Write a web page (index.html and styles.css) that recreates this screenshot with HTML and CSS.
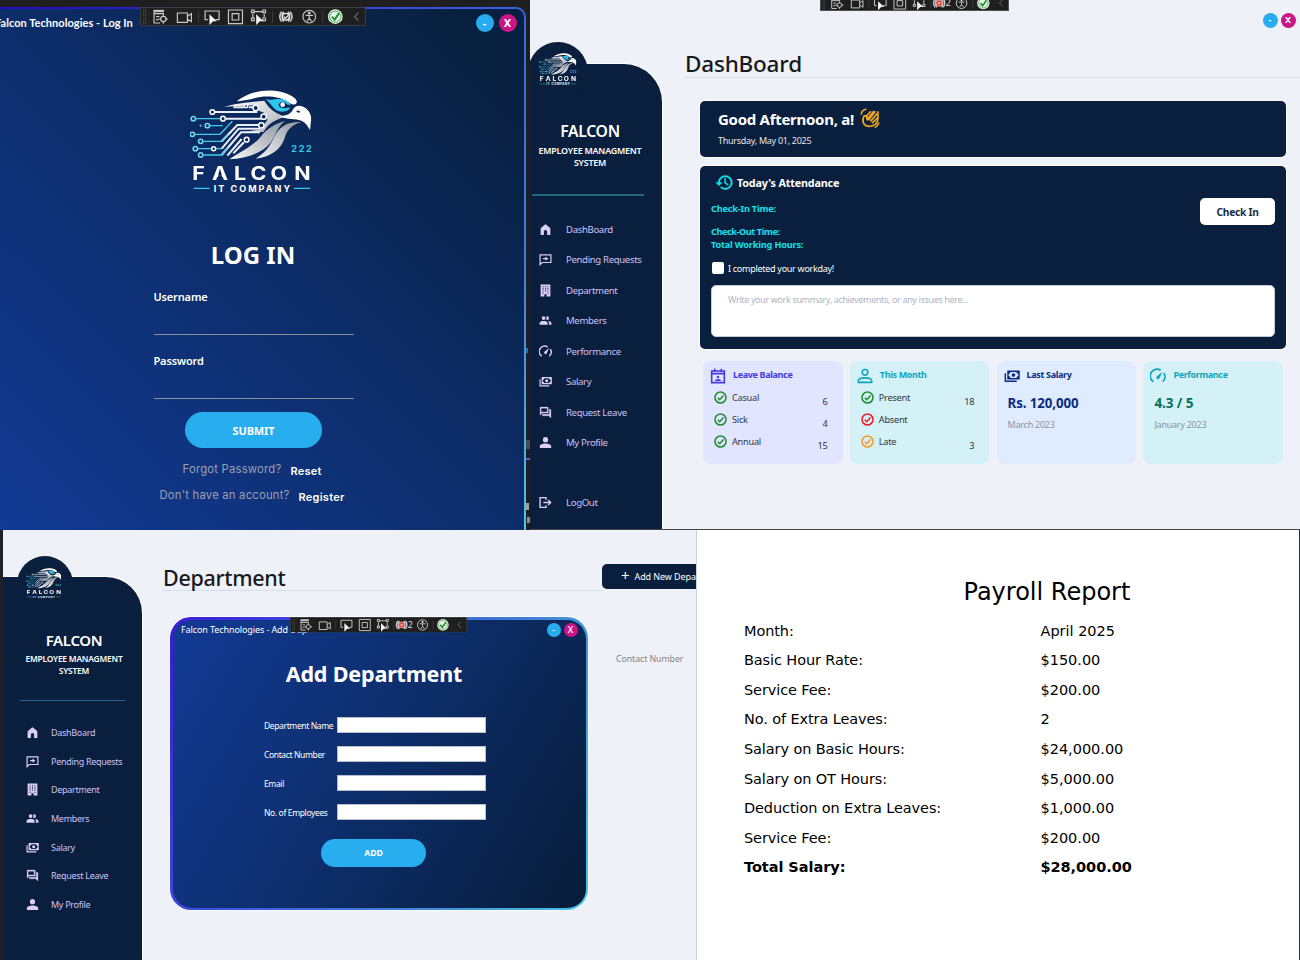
FILE: index.html
```html
<!DOCTYPE html>
<html lang="en">
<head>
<meta charset="utf-8">
<title>Falcon Technologies</title>
<link rel="stylesheet" href="styles.css">
</head>
<body>
<svg class="defs" aria-hidden="true">
  <defs>
    <linearGradient id="silver" x1="0" y1="0" x2="1" y2="1"><stop offset="0" stop-color="#fff"/><stop offset="1" stop-color="#a9adb5"/></linearGradient>
    <linearGradient id="plume" x1="1" y1="0" x2="0" y2="1"><stop offset="0" stop-color="#8f959f"/><stop offset="1" stop-color="#f4f5f7"/></linearGradient>
    <mask id="noBar" maskUnits="userSpaceOnUse" x="0" y="200" width="510" height="220"><rect x="0" y="200" width="510" height="220" fill="#fff"/><path d="M120.500 333 L130.500 305 L140.500 333Z" fill="#000"/></mask>
  </defs>
  <symbol id="falcon" viewBox="60 60 365 310" preserveAspectRatio="none">
    <path fill="url(#silver)" d="M162 110C185 104 205 100 225 98L283 92C292 108 305 122 328 133L345 141C325 146 305 155 290 172L280 186H225L272 178L292 150L282 128L266 122L252 106Z"/>
    <path fill="#fff" d="M200 94C235 66 285 55 332 65C362 72 385 88 380 98C374 108 362 103 350 94C325 77 280 76 248 86C230 90 215 92 200 94Z"/>
    <path fill="#fff" d="M330 139C350 137 362 132 368 120C374 108 385 105 396 109C415 116 426 134 423 152L420 180C412 166 406 157 394 152C376 146 352 150 330 139Z"/>
    <path fill="#0c2a5e" d="M378 123q8-4 13 3q-7 5-13-3z"/>
    <path fill="#2ec4ee" d="M285 88C305 92 318 84 338 88C350 90 358 98 362 106L350 103A13 13 0 0 0 326 103C326 112 336 118 360 112C358 124 335 130 318 120C306 112 300 96 285 88Z"/>
    <circle cx="338" cy="104" r="7" fill="#fff"/>
    <path fill="url(#plume)" d="M178 268C215 243 250 228 272 200C290 176 318 160 345 153C318 176 318 196 300 220C278 248 230 266 178 268Z"/>
    <path fill="url(#plume)" d="M257 266C290 246 300 226 312 202C326 172 350 154 395 156C362 166 350 182 344 204C334 238 300 262 257 266Z"/>
    <g fill="none" stroke="#e9eef7" stroke-width="6">
      <path d="M135 126H262M167 146H274M190 112H222M236 112H249M155 214L202 165H266M155 236L206 176H272M155 255L213 187H270M172 257L215 207M190 250L222 217"/>
    </g>
    <g fill="none" stroke="#43cdea" stroke-width="4">
      <path d="M78 146H151M120 167H158M75 193H150L187 154M100 214H155L175 194M84 236H123M139 236H156M100 255H155L175 232"/>
    </g>
    <g fill="#0c2a5e" stroke="#fff" stroke-width="4.500">
      <circle cx="127" cy="126" r="7"/><circle cx="159" cy="146" r="7"/><circle cx="257" cy="114" r="8"/><circle cx="228" cy="108" r="5"/><circle cx="281" cy="140" r="8"/><circle cx="274" cy="166" r="8"/><circle cx="230" cy="209" r="7"/><circle cx="131" cy="236" r="6"/>
    </g>
    <g fill="#0c2a5e" stroke="#6fdcf2" stroke-width="4.500">
      <circle cx="70" cy="146" r="6.500"/><circle cx="112" cy="167" r="6.500"/><circle cx="67" cy="193" r="6.500"/><circle cx="92" cy="214" r="6.500"/><circle cx="76" cy="236" r="6.500"/><circle cx="92" cy="255" r="6.500"/><circle cx="92" cy="167" r="1"/>
    </g>
    <path stroke="#35c9ea" stroke-width="4" d="M71 355H119M371 355H420"/>
  </symbol>

  <symbol id="bar" viewBox="0 0 677 57" preserveAspectRatio="none">
    <rect x="1" y="1" width="675" height="55" fill="#1f1f1f" stroke="#4a4a4a" stroke-width="2"/>
    <path d="M11 6V52M17 6V52" stroke="#5a5a5a" stroke-width="3" stroke-dasharray="3 3"/>
    <path d="M175 12V48M397 12V48M547 12V48" stroke="#3c3c3c" stroke-width="3"/>
    <g fill="none" stroke="#c9c9c9" stroke-width="3.500">
      <path d="M42 9V48H60M42 20H72M48 29H58M48 38H56"/><path d="M42 12H72" stroke-width="7"/>
      <circle cx="70" cy="36" r="8"/><path d="M70 22V29M70 43V50M56 36H63M77 36H84"/>
      <path d="M112 18H142V46H112ZM142 28L154 20V44L142 36"/>
      <path d="M203 38H195V12H237V38H226"/>
      <path d="M265 9H307V50H265ZM276 20H296V39H276Z"/>
      <path d="M340 14H370M338 20V35M372 20V30M334 9h8v8h-8zM368 9h8v8h-8zM334 33h8v8h-8zM368 33h8v8h-8z"/>
      <circle cx="507" cy="29" r="19"/><path d="M496 25H518M507 25V34L500 43M507 34L514 43"/>
    </g>
    <circle cx="507" cy="18" r="4" fill="#ddd"/>
    <path fill="#f4f4f4" d="M208 22L230 43H219L208 54ZM348 22L370 43H359L348 54Z"/>
    <circle cx="585" cy="29" r="22" fill="#e8f6e8"/><circle cx="585" cy="29" r="17" fill="none" stroke="#55a65c" stroke-width="3"/>
    <path d="M575 29L583 38L596 19" fill="none" stroke="#228b33" stroke-width="6"/>
    <path d="M654 17L643 29L654 41" fill="none" stroke="#777" stroke-width="3"/>
  </symbol>

  <symbol id="home" viewBox="0 0 24 24"><path fill="currentColor" d="M3 22V10.500Q3 9.500 4 8.700L10.500 3Q12 1.800 13.500 3L20 8.700Q21 9.500 21 10.500V22H15V16A3 3 0 0 0 9 16V22Z"/></symbol>
  <symbol id="pending" viewBox="0 0 24 24"><path fill="none" stroke="currentColor" stroke-width="2.200" d="M2 21.500V3.500H22V17.500H6ZM7.500 10.500H16"/><path fill="currentColor" d="M12 6.500L17 10.500L12 14.500Z"/></symbol>
  <symbol id="building" viewBox="0 0 24 24"><path fill="currentColor" fill-rule="evenodd" d="M3 1H21V23H14V19H10V23H3ZM6.500 4V6H8.500V4ZM11 4V6H13V4ZM15.500 4V6H17.500V4ZM6.500 8V10H8.500V8ZM11 8V10H13V8ZM15.500 8V10H17.500V8ZM6.500 12V14H8.500V12ZM11 12V14H13V12ZM15.500 12V14H17.500V12ZM6.500 16V18H8.500V16ZM15.500 16V18H17.500V16Z"/></symbol>
  <symbol id="members" viewBox="0 0 24 24"><path fill="currentColor" d="M16 17v3H1v-3s0-4 7.500-4 7.500 4 7.500 4M12 7.500A3.500 3.500 0 1 0 8.500 11 3.500 3.500 0 0 0 12 7.500M16.500 13A5.300 5.300 0 0 1 18.500 17v3H23v-3s0-3.600-6.500-4M15 4a3.400 3.400 0 0 0-1.900.6 5 5 0 0 1 0 5.800A3.400 3.400 0 0 0 15 11a3.500 3.500 0 0 0 0-7z"/></symbol>
  <symbol id="gauge" viewBox="0 0 24 24"><path fill="none" stroke="currentColor" stroke-width="2.600" d="M5 20.500A10 10 0 0 1 16 3.500M20.800 7.500A10 10 0 0 1 19 20.500"/><path fill="currentColor" d="M18.500 5.500L14.300 15.500A2.600 2.600 0 1 1 10 12.600Z"/></symbol>
  <symbol id="cash" viewBox="0 0 24 24"><path fill="none" stroke="currentColor" stroke-width="2.200" d="M6 5H22.500V16H6ZM2 8V20H19"/><path fill="currentColor" d="M6 5h4a4 4 0 0 1-4 4zM22.500 5h-4a4 4 0 0 0 4 4zM6 16h4a4 4 0 0 0-4-4zM22.500 16h-4a4 4 0 0 1 4-4z"/><circle cx="14.200" cy="10.500" r="2.800" fill="currentColor"/></symbol>
  <symbol id="forum" viewBox="0 0 24 24"><path fill="currentColor" d="M15 4v7H5.170L4 12.170V4h11m1-2H3a1 1 0 0 0-1 1v14l4-4h10a1 1 0 0 0 1-1V3a1 1 0 0 0-1-1m5 4h-2v9H6v2a1 1 0 0 0 1 1h11l4 4V7a1 1 0 0 0-1-1z" stroke="currentColor" stroke-width=".6"/></symbol>
  <symbol id="person" viewBox="0 0 24 24"><path fill="currentColor" d="M12 2a4.800 4.800 0 1 1 0 9.600A4.800 4.800 0 0 1 12 2m0 12c5.500 0 10.500 2 10.500 5v3h-21v-3c0-3 5-5 10.500-5z"/></symbol>
  <symbol id="logout" viewBox="0 0 24 24"><path fill="none" stroke="currentColor" stroke-width="2.600" d="M13 7V3H2V21H13V17M8 12H21M17 7.500L21.500 12L17 16.500"/></symbol>
  <symbol id="history" viewBox="0 0 24 24"><path fill="currentColor" stroke="currentColor" stroke-width=".5" d="M13.500 7H12v6l4.280 2.540.72-1.210-3.500-2.080V7M13 3a9 9 0 0 0-9 9H1l3.960 4.030L9 12H6a7 7 0 0 1 7-7 7 7 0 0 1 7 7 7 7 0 0 1-7 7c-1.930 0-3.680-.79-4.940-2.060l-1.420 1.420A8.900 8.900 0 0 0 13 21a9 9 0 0 0 9-9 9 9 0 0 0-9-9"/></symbol>
  <symbol id="calendar" viewBox="0 0 24 24"><path fill="none" stroke="currentColor" stroke-width="2.400" d="M2.500 4.500H21.500V22H2.500ZM2.500 8.500H21.500M7 1V6M17 1V6"/><circle cx="12" cy="13.500" r="2" fill="currentColor"/><path fill="currentColor" d="M7.500 19.500q0-3 4.500-3t4.500 3z"/></symbol>
  <symbol id="person-line" viewBox="0 0 24 24"><g fill="none" stroke="currentColor" stroke-width="2.400"><circle cx="12" cy="6.500" r="4.300"/><path d="M2 21.500V19C2 13.500 22 13.500 22 19V21.500Z"/></g></symbol>
  <symbol id="tick" viewBox="0 0 24 24"><g fill="none" stroke="currentColor" stroke-width="2.800"><circle cx="12" cy="12" r="10.200"/><path d="M7 12.500L10.500 16L17.500 8.500"/></g></symbol>
  <symbol id="clap" viewBox="0 0 24 24"><g fill="none" stroke="#f0a71d" stroke-width="2" stroke-linecap="round" stroke-linejoin="round"><path d="M5 9.500C1.500 15 4 22 11.500 22C17 22 21.500 18 21.500 13V4.500"/><path d="M5 9.500Q8 8 8.500 14L16 4.500M10.500 14L18 4.500M13 15.500L21 6.500M15 17.500L21.500 11.500M8.500 14V9L12.500 4.500"/><path d="M1.500 7Q2.500 2.500 7 1.500M22.500 18Q21.500 21 18.500 23"/></g></symbol>
</svg>

<main class="board">
  <section class="shot login-shot">
    <div class="frame login-frame"><div class="pane login-pane">
      <header class="titlebar login-titlebar">
        <span class="caption login-caption">Falcon Technologies - Log In</span>
        <span class="dots"><b class="dot min">-</b><b class="dot close">X</b></span>
      </header>
      <svg class="logo-big" viewBox="60 60 365 310" preserveAspectRatio="none"><use href="#falcon" x="60" y="60" width="365" height="310"/><text x="364" y="247" class="logo-num" textLength="61">222</text><text x="58 109.5 167 210 262 324" y="331" transform="scale(1.15 1)" class="logo-name" mask="url(#noBar)">FALCON</text><text x="131" y="366" class="logo-sub" textLength="229">IT COMPANY</text></svg>
      <h1 class="login-title">LOG IN</h1>
      <form class="login-form">
        <label class="login-label">Username</label><div class="line-field"></div>
        <label class="login-label second">Password</label><div class="line-field"></div>
      </form>
      <div class="pill submit">SUBMIT</div>
      <p class="hint forgot"><span>Forgot Password?</span><b>Reset</b></p>
      <p class="hint signup"><span>Don't have an account?</span><b>Register</b></p>
    </div></div>
    <svg class="debugbar one" viewBox="0 0 677 57" preserveAspectRatio="none"><use href="#bar" width="677" height="57"/>
      <path d="M424 14Q414 28 424 44M430 14Q422 28 430 44M450 14Q460 28 450 44M444 14Q452 28 444 44" fill="none" stroke="#ccc" stroke-width="5"/>
      <circle cx="437" cy="29" r="10" fill="#1f1f1f" stroke="#eee" stroke-width="4"/><path d="M431 29l5 5 8-9" fill="none" stroke="#eee" stroke-width="4"/>
    </svg>
    <i class="speck s1"></i><i class="speck s2"></i><i class="speck s3"></i><i class="speck s4"></i><i class="speck s5"></i>
  </section>

  <section class="shot dash-shot">
    <aside class="side dash-side">
      <div class="badge dash-badge"></div>
      <svg class="logo-small dash-logo" viewBox="60 60 365 310" preserveAspectRatio="none"><use href="#falcon" x="60" y="60" width="365" height="310"/><text x="364" y="247" class="logo-num" textLength="61">222</text><text x="58 109.5 167 210 262 324" y="331" transform="scale(1.15 1)" class="logo-name" mask="url(#noBar)">FALCON</text><text x="131" y="366" class="logo-sub" textLength="229">IT COMPANY</text></svg>
      <h2 class="brand">FALCON</h2>
      <p class="tagline">EMPLOYEE MANAGMENT<br>SYSTEM</p>
      <hr class="rule">
      <nav class="menu">
        <a><svg><use href="#home"/></svg>DashBoard</a>
        <a><svg><use href="#pending"/></svg>Pending Requests</a>
        <a><svg><use href="#building"/></svg>Department</a>
        <a><svg><use href="#members"/></svg>Members</a>
        <a><svg><use href="#gauge"/></svg>Performance</a>
        <a><svg><use href="#cash"/></svg>Salary</a>
        <a><svg><use href="#forum"/></svg>Request Leave</a>
        <a><svg><use href="#person"/></svg>My Profile</a>
        <a class="logout"><svg><use href="#logout"/></svg>LogOut</a>
      </nav>
    </aside>
    <div class="dash-main">
      <div class="dots dash-dots"><b class="dot min">-</b><b class="dot close">X</b></div>
      <h1 class="page-title dash-title">DashBoard</h1>
      <div class="card greet">
        <h3>Good Afternoon, a!<svg><use href="#clap"/></svg></h3>
        <p>Thursday, May 01, 2025</p>
      </div>
      <div class="card attend">
        <div class="attend-top">
          <div class="attend-info">
            <h4><svg><use href="#history"/></svg>Today's Attendance</h4>
            <p class="cyan in">Check-In Time:</p>
            <p class="cyan out">Check-Out Time:</p>
            <p class="cyan total">Total Working Hours:</p>
          </div>
          <div class="checkin">Check In</div>
        </div>
        <label class="done"><i></i>I completed your workday!</label>
        <div class="summary">Write your work summary, achievements, or any issues here...</div>
      </div>
      <div class="stats">
        <div class="stat lilac">
          <h5><svg><use href="#calendar"/></svg>Leave Balance</h5>
          <div class="item"><svg><use href="#tick"/></svg>Casual<em>6</em></div>
          <div class="item"><svg><use href="#tick"/></svg>Sick<em>4</em></div>
          <div class="item"><svg><use href="#tick"/></svg>Annual<em>15</em></div>
        </div>
        <div class="stat aqua">
          <h5><svg><use href="#person-line"/></svg>This Month</h5>
          <div class="item"><svg><use href="#tick"/></svg>Present<em>18</em></div>
          <div class="item bad"><svg><use href="#tick"/></svg>Absent</div>
          <div class="item late"><svg><use href="#tick"/></svg>Late<em>3</em></div>
        </div>
        <div class="stat sky">
          <h5><svg><use href="#cash"/></svg>Last Salary</h5>
          <strong>Rs. 120,000</strong><small>March 2023</small>
        </div>
        <div class="stat aqua">
          <h5><svg><use href="#gauge"/></svg>Performance</h5>
          <strong class="score">4.3 / 5</strong><small>January 2023</small>
        </div>
      </div>
    </div>
    <svg class="debugbar two" viewBox="0 0 677 57" preserveAspectRatio="none"><use href="#bar" width="677" height="57"/>
      <path d="M412 14Q402 28 412 44M418 14Q410 28 418 44M442 14Q452 28 442 44M436 14Q444 28 436 44" fill="none" stroke="#ccc" stroke-width="5"/>
      <circle cx="427" cy="29" r="11" fill="#e5352b" stroke="#f3b6b2" stroke-width="3"/><path d="M423 25l8 8M431 25l-8 8" stroke="#fff" stroke-width="3"/>
      <text x="450" y="40" class="bar-count">2</text>
    </svg>
  </section>

  <section class="shot dept-shot">
    <aside class="side dept-side">
      <div class="badge dept-badge"></div>
      <svg class="logo-small dept-logo" viewBox="60 60 365 310" preserveAspectRatio="none"><use href="#falcon" x="60" y="60" width="365" height="310"/><text x="364" y="247" class="logo-num" textLength="61">222</text><text x="58 109.5 167 210 262 324" y="331" transform="scale(1.15 1)" class="logo-name" mask="url(#noBar)">FALCON</text><text x="131" y="366" class="logo-sub" textLength="229">IT COMPANY</text></svg>
      <h2 class="brand">FALCON</h2>
      <p class="tagline">EMPLOYEE MANAGMENT<br>SYSTEM</p>
      <hr class="rule">
      <nav class="menu">
        <a><svg><use href="#home"/></svg>DashBoard</a>
        <a><svg><use href="#pending"/></svg>Pending Requests</a>
        <a><svg><use href="#building"/></svg>Department</a>
        <a><svg><use href="#members"/></svg>Members</a>
        <a><svg><use href="#cash"/></svg>Salary</a>
        <a><svg><use href="#forum"/></svg>Request Leave</a>
        <a><svg><use href="#person"/></svg>My Profile</a>
      </nav>
    </aside>
    <div class="dept-main">
      <div class="dept-head"><h1 class="page-title dept-title">Department</h1><div class="add-btn"><span>+</span>Add New Depa</div></div>
      <div class="dept-body">
        <div class="frame dialog"><div class="pane dialog-pane">
          <header class="titlebar dialog-titlebar">
            <span class="caption">Falcon Technologies - Add Dep</span>
            <span class="dots"><b class="dot min">-</b><b class="dot close">X</b></span>
          </header>
          <h2 class="dialog-title">Add Department</h2>
          <div class="dialog-form">
            <label>Department Name</label><div class="box"></div>
            <label>Contact Number</label><div class="box"></div>
            <label>Email</label><div class="box"></div>
            <label>No. of Employees</label><div class="box"></div>
          </div>
          <div class="pill add">ADD</div>
        </div></div>
        <span class="col-head">Contact Number</span>
      </div>
    </div>
    <svg class="debugbar three" viewBox="0 0 677 57" preserveAspectRatio="none"><use href="#bar" width="677" height="57"/>
      <path d="M412 14Q402 28 412 44M418 14Q410 28 418 44M442 14Q452 28 442 44M436 14Q444 28 436 44" fill="none" stroke="#ccc" stroke-width="5"/>
      <circle cx="427" cy="29" r="11" fill="#e5352b" stroke="#f3b6b2" stroke-width="3"/><path d="M423 25l8 8M431 25l-8 8" stroke="#fff" stroke-width="3"/>
      <text x="450" y="40" class="bar-count">2</text>
    </svg>
  </section>

  <section class="shot payroll">
    <h1>Payroll Report</h1>
    <dl>
      <dt>Month:</dt><dd>April 2025</dd>
      <dt>Basic Hour Rate:</dt><dd>$150.00</dd>
      <dt>Service Fee:</dt><dd>$200.00</dd>
      <dt>No. of Extra Leaves:</dt><dd>2</dd>
      <dt>Salary on Basic Hours:</dt><dd>$24,000.00</dd>
      <dt>Salary on OT Hours:</dt><dd>$5,000.00</dd>
      <dt>Deduction on Extra Leaves:</dt><dd>$1,000.00</dd>
      <dt>Service Fee:</dt><dd>$200.00</dd>
      <dt class="sum">Total Salary:</dt><dd class="sum">$28,000.00</dd>
    </dl>
  </section>
</main>
</body>
</html>
```
FILE: styles.css
```css
* { box-sizing: border-box; }
body, h1, h2, h3, h4, h5, p, dl, dd, hr { margin: 0; padding: 0; }
body { width: 1300px; height: 960px; overflow: hidden; background: #1f1f1f; font-family: "Noto Sans", "Open Sans", sans-serif; white-space: nowrap; }
svg { display: block; flex: none; }
.defs { position: absolute; width: 0; height: 0; }

.logo-num { font: 700 27px Inter, sans-serif; fill: #35c9ea; }
.logo-name { font: 700 56px Inter, sans-serif; fill: #fff; }
.logo-sub { font: 700 27px Inter, sans-serif; fill: #fff; }
.bar-count { font: 34px "Noto Sans", sans-serif; fill: #ddd; }

.board { display: grid; grid-template-columns: 530px 166px 604px; grid-template-rows: 530px 430px; width: 1300px; height: 960px; }
.shot { position: relative; overflow: hidden; }
.debugbar { position: absolute; }

/* Windows */
.frame { padding: 2.5px; }
.pane { width: 100%; height: 100%; color: #fff; }
.titlebar { display: flex; justify-content: space-between; align-items: center; }
.dots { display: flex; }
.dot { display: block; border-radius: 50%; text-align: center; color: #fff; }
.min { background: #27adef; }
.close { background: #cb1587; }
.pill { background: #28adee; color: #fff; font-weight: 700; text-align: center; }

/* Log in */
.login-shot { background: #1f1f1f; padding-top: 7px; }
.login-frame { width: 526px; height: 523px; padding: 2px 2.5px 0 0; border-radius: 0 10px 0 0; background: linear-gradient(180deg, #3b63dc 0, #3f7fdf 50%, #4ac6ec 100%) right / 3px 100% no-repeat, linear-gradient(90deg, #200cbc, #3b63dc); }
.login-pane { display: flex; flex-direction: column; border-radius: 0 8px 0 0; background: linear-gradient(45deg, #123a94 0%, #0d2d6a 50%, #08203f 92%); }
.login-titlebar { height: 28px; padding-right: 7px; }
.login-caption { margin: -2px 0 0 -5px; font: 700 11px Lato, sans-serif; letter-spacing: .05px; }
.login-titlebar .dots { gap: 5px; }
.login-titlebar .dot { width: 18px; height: 18px; font-size: 11px; line-height: 17px; }
.logo-big { width: 121.700px; height: 103.300px; margin: 53px 0 0 190px; }
.login-title { width: 200px; margin: 45px 0 0 153px; font-size: 24px; line-height: 34px; text-align: center; }
.login-form { width: 200px; margin: 18px 0 0 154px; }
.login-label { display: block; height: 16px; font-size: 11px; font-weight: 600; line-height: 14px; letter-spacing: -.15px; text-indent: -.5px; }
.line-field { height: 29px; border-bottom: 1px solid #8a8f9c; }
.second { margin-top: 19px; }
.submit { width: 137px; height: 36px; margin: 13px 0 0 185px; border-radius: 18px; font-size: 11px; line-height: 38px; letter-spacing: -.1px; }
.hint { display: flex; height: 16px; font: 400 11.300px/16px Inter, sans-serif; letter-spacing: .2px; color: #9ba1ae; }
.hint b { position: relative; top: 2px; color: #fff; font-size: 11px; font-weight: 600; letter-spacing: .25px; }
.forgot { margin: 13px 0 0 182.500px; gap: 9px; }
.signup { margin: 10px 0 0 159.500px; gap: 9px; }
.one { left: 140px; top: 7px; width: 226px; height: 19px; }
.speck { position: absolute; left: 526px; width: 4px; height: 5px; }
.s1 { top: 348px; width: 2px; background: #2a6fb4; }
.s2 { top: 440px; height: 9px; background: #4a4a4a; }
.s3 { top: 458px; height: 2px; background: #6a55d0; }
.s4 { top: 503px; height: 7px; width: 3px; background: #a9a08a; }
.s5 { top: 517px; height: 6px; width: 3px; left: 527px; background: #9a8a68; }

/* Side menu */
.side { position: relative; flex: none; background: #0a1f3d; color: #fff; box-shadow: 1px -1px 0 0 #fafbfd; text-align: center; }
.badge { position: absolute; border-radius: 50%; background: #0a1f3d; }
.logo-small { position: absolute; }
.brand { font-weight: 600; }
.tagline { font-weight: 600; }
.rule { border: 0; background: #246584; }
.menu { text-align: left; color: #cfc3f5; }
.menu a { display: flex; align-items: center; }
.menu svg { width: 13px; height: 13px; color: #dccdfb; }

/* Dashboard */
.dash-shot { grid-column: 2 / 4; display: flex; background: #eef1f7; border-bottom: 1px solid #444; }
.dash-side { width: 132px; height: 465px; margin-top: 64px; border-radius: 0 38px 0 0; }
.dash-badge { left: -2px; top: -22.500px; width: 60px; height: 60px; }
.dash-logo { left: 9px; top: -11px; width: 37.500px; height: 32.500px; }
.dash-side .brand { width: 120px; padding-top: 56px; font-size: 15.700px; line-height: 22px; letter-spacing: -.3px; }
.dash-side .tagline { width: 120px; margin-top: 3px; font-size: 8.900px; line-height: 12px; letter-spacing: -.2px; }
.dash-side .rule { width: 112px; height: 2px; margin: 25px 0 0 2px; }
.dash-side .menu { margin: 18px 0 0 9px; font-size: 9.600px; letter-spacing: -.35px; }
.dash-side .menu a { height: 30.500px; gap: 14px; }
.dash-side .menu .logout { margin-top: 29px; }
.dash-main { flex: 1; min-width: 0; padding-left: 23px; }
.dash-dots { justify-content: flex-end; gap: 3px; height: 41px; padding: 13px 4.500px 0 0; }
.dash-dots .dot { width: 15px; height: 15px; font-size: 9px; line-height: 14px; }
.page-title { font-weight: 500; color: #16181c; border-bottom: 1px solid #d7dfea; }
.dash-title { height: 37px; padding-top: 7px; font-size: 22.500px; line-height: 32px; letter-spacing: -.2px; }
.card { width: 586px; margin-left: 15px; border-radius: 5px; background: #0a1f3d; color: #fff; box-shadow: 0 0 0 1px #fafbfd; }
.greet { height: 56px; margin-top: 23px; padding: 7px 0 0 18px; }
.greet h3 { display: flex; gap: 6px; height: 22px; font-size: 15px; line-height: 22px; letter-spacing: -.28px; }
.greet h3 svg { width: 20px; height: 20px; }
.greet p { margin-top: 4px; font-size: 9px; line-height: 14px; letter-spacing: -.28px; color: #e3e7ee; }
.attend { height: 183px; margin-top: 9px; padding: 6px 11px 0; }
.attend-top { display: flex; justify-content: space-between; height: 88px; }
.attend h4 { display: flex; align-items: center; gap: 3px; height: 20px; padding-left: 4px; font-size: 10.800px; letter-spacing: -.18px; }
.attend h4 svg { width: 19px; height: 19px; color: #14e0ea; }
.cyan { height: 13px; color: #14e0ea; font-size: 9.200px; font-weight: 700; line-height: 13px; letter-spacing: -.2px; }
.in { margin: 10px 0 10px; }
.out { letter-spacing: -.45px; }
.checkin { width: 75px; height: 27px; margin-top: 26px; border-radius: 5px; background: #fff; color: #1b2c49; font-size: 10.200px; font-weight: 700; line-height: 28px; text-align: center; letter-spacing: -.25px; }
.done { display: flex; align-items: center; gap: 4px; height: 16px; font-size: 9px; letter-spacing: -.28px; }
.done i { width: 12px; height: 12px; margin-left: 1px; border-radius: 2px; background: #fff; }
.summary { height: 52px; margin-top: 9px; padding: 6px 16px; border: 1px solid #c8ccd4; border-radius: 5px; background: #fff; color: #adb6c4; font-size: 9px; line-height: 15px; letter-spacing: -.35px; }
.stats { display: grid; grid-template-columns: repeat(4, 139.500px); gap: 7.300px; margin: 12px 0 0 18px; }
.stat { height: 103px; padding: 2px 15px 0 9px; border-radius: 8px; }
.lilac { background: #e2e5ff; color: #4338e8; }
.aqua { background: #d4f1f8; color: #0fa6bd; }
.sky { background: #dfebff; color: #0c2c80; }
.stat h5 { display: flex; align-items: center; gap: 7px; height: 22px; margin: 0 0 1.500px -2px; font-size: 9px; letter-spacing: -.35px; }
.stat h5 svg { width: 16px; height: 16px; margin-top: 3px; }
.item { display: flex; align-items: center; height: 22.200px; margin-left: 2px; gap: 5px; color: #32363d; font-size: 9.200px; letter-spacing: -.25px; }
.item svg { width: 13px; height: 13px; color: #1b8f2b; }
.item em { margin: 8px 0 0 auto; font-style: normal; }
.bad svg { color: #ee1c25; }
.late svg { color: #f79a26; }
.stat strong, .stat small { display: block; margin-left: 2px; }
.stat strong { height: 20px; margin-top: 7.500px; font-size: 13.300px; line-height: 20px; letter-spacing: -.1px; }
.stat small { margin-top: 5px; color: #8c929c; font-size: 9px; line-height: 13px; letter-spacing: -.25px; }
.stat .score { color: #08705c; font-size: 13.500px; }
.two { left: 290px; top: -5.500px; width: 189px; height: 16px; }

/* Department */
.dept-shot { grid-column: 1 / 3; display: flex; padding-left: 3px; background: linear-gradient(90deg, #1f2128 3px, #eef1f7 3px); }
.dept-side { width: 139px; height: 383px; margin-top: 47px; border-radius: 0 36px 0 0; }
.dept-badge { left: 13.500px; top: -21px; width: 56px; height: 56px; }
.dept-logo { left: 23px; top: -9px; width: 35.300px; height: 30.300px; }
.dept-side .brand { width: 142px; padding-top: 52px; font-size: 15px; line-height: 22px; letter-spacing: -.35px; }
.dept-side .tagline { width: 142px; margin-top: 2px; font-size: 8.400px; line-height: 11.500px; letter-spacing: -.2px; }
.dept-side .rule { width: 105px; height: 1px; margin: 24px 0 0 17px; }
.dept-side .menu { margin: 17.500px 0 0 22.500px; font-size: 9px; letter-spacing: -.3px; }
.dept-side .menu a { height: 28.600px; gap: 12.500px; }
.dept-main { flex: 1; min-width: 0; padding-left: 21px; }
.dept-head { display: flex; height: 61px; padding-top: 30px; }
.dept-title { flex: 1; font-size: 21.500px; line-height: 35px; height: 31px; letter-spacing: -.3px; }
.add-btn { display: flex; align-items: center; width: 94px; height: 25px; margin-top: 4px; padding-left: 19px; gap: 5px; border-radius: 5px 0 0 5px; background: #0a1f3d; color: #fff; font-size: 9px; letter-spacing: -.1px; }
.add-btn span { font-size: 15px; line-height: 15px; margin-top: -2px; }
.dept-body { display: flex; padding: 26px 0 0 7px; }
.dialog { width: 418px; height: 293px; flex: none; border-radius: 21px; background: linear-gradient(115deg, #3a1ad8 0%, #3f4fe0 30%, #3e76d8 60%, #45c6e4 100%); box-shadow: 0 0 0 1px #fafbfd; }
.dialog-pane { border-radius: 19px; background: linear-gradient(120deg, #123a95 0%, #0d2d68 52%, #071c38 100%); }
.dialog-titlebar { height: 20px; padding: 1px 8px 0 8.500px; }
.dialog-titlebar .caption { margin-top: -2px; font-size: 9px; letter-spacing: -.1px; }
.dialog-titlebar .dots { gap: 3px; }
.dialog-titlebar .dot { width: 14px; height: 14px; font-size: 9px; font-weight: 500; line-height: 13px; }
.dialog-title { margin: 18px 0 0 -10px; font-size: 21.500px; line-height: 32px; text-align: center; letter-spacing: -.15px; }
.dialog-form { display: grid; grid-template-columns: 72.500px 149px; grid-auto-rows: 16px; row-gap: 13.200px; margin: 27px 0 0 91.500px; font-size: 8.500px; line-height: 18px; letter-spacing: -.37px; }
.box { height: 16px; background: #fff; border: 1px solid #b8bfcc; }
.add { width: 105px; height: 28px; margin: 19px 0 0 148.500px; border-radius: 14px; font-size: 8.700px; line-height: 29px; }
.col-head { margin: 35px 0 0 28px; color: #7f848c; font-size: 8.800px; line-height: 14px; letter-spacing: -.08px; }
.three { left: 290px; top: 87px; width: 177px; height: 15.500px; }

/* Payroll */
.payroll { grid-column: 3; background: #fff; border-left: 1px solid #c9d2de; border-right: 1px solid #20304a; font-family: "DejaVu Sans", Verdana, sans-serif; color: #000; }
.payroll h1 { margin: 46px 0 0 266.500px; font-size: 24px; font-weight: 400; line-height: 32px; }
.payroll dl { display: grid; grid-template-columns: 296.500px 1fr; grid-auto-rows: 29.620px; margin: 8.500px 0 0 47px; font-size: 14.500px; line-height: 29.620px; letter-spacing: -.02px; }
.payroll dt { letter-spacing: -.11px; }
.payroll .sum { font-weight: 700; letter-spacing: -.05px; }
```
